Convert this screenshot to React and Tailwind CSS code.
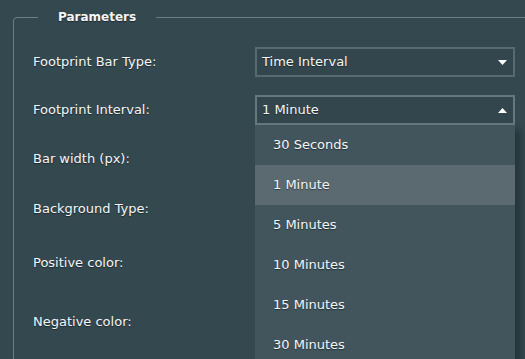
import React from "react";

const rows = [
	{ label: "Footprint Bar Type:", h: "h-[30px]", select: "Time Interval", open: false },
	{ label: "Footprint Interval:", h: "h-[30px]", select: "1 Minute", open: true },
	{ label: "Bar width (px):", h: "h-[32px]" },
	{ label: "Background Type:", h: "h-[32px]" },
	{ label: "Positive color:", h: "h-[40px]" },
	{ label: "Negative color:", h: "h-[42px]" },
];

const options = ["30 Seconds", "1 Minute", "5 Minutes", "10 Minutes", "15 Minutes", "30 Minutes"];

const Arrow = ({ up }) => (
	<svg width="9" height="5" viewBox="0 0 9 5" className="shrink-0">
		{up ? <path d="M0 5 L4.5 0 L9 5 Z" fill="#ffffff" /> : <path d="M0 0 L9 0 L4.5 5 Z" fill="#ffffff" />}
	</svg>
);

const Select = ({ value, open }) => (
	<div className="relative h-full w-[260px]">
		<div
			className={`flex h-full items-center justify-between border-2 ${open ? "border-[#647880]" : "border-[#566a72]"} bg-[#33464e] pl-[5px] pr-[6px]`}>
			<span>{value}</span>
			<Arrow up={open} />
		</div>
		{open && (
			<ul className="absolute left-0 top-full z-10 w-[260px] bg-[#42555c] shadow-[6px_4px_6px_rgba(0,0,0,0.25)]">
				{options.map((o) => (
					<li
						key={o}
						className={`flex h-[40px] items-center pl-[18px] ${o === value ? "bg-[#5a6a70]" : ""}`}>
						{o}
					</li>
				))}
			</ul>
		)}
	</div>
);

export default function App() {
	return (
		<div className="h-[359px] w-[525px] overflow-hidden bg-[#344850] pl-[13px] pt-[7px] font-['DejaVu_Sans',sans-serif] text-[13px] text-[#f4f6f6] [text-shadow:0_1px_1px_rgba(0,0,0,0.45)]">
			<fieldset className="w-[560px] rounded-tl-[4px] border border-[#6b7e85] pb-6 pl-[19px] pt-[20px]">
				<legend className="ml-[5px] px-[20px] text-[12px] font-bold leading-[20px]">Parameters</legend>
				<div className="flex flex-col gap-[18px]">
					{rows.map((r) => (
						<div key={r.label} className={`flex items-center ${r.h}`}>
							<span className="w-[222px] shrink-0">{r.label}</span>
							{r.select && <Select value={r.select} open={r.open} />}
						</div>
					))}
				</div>
			</fieldset>
		</div>
	);
}
